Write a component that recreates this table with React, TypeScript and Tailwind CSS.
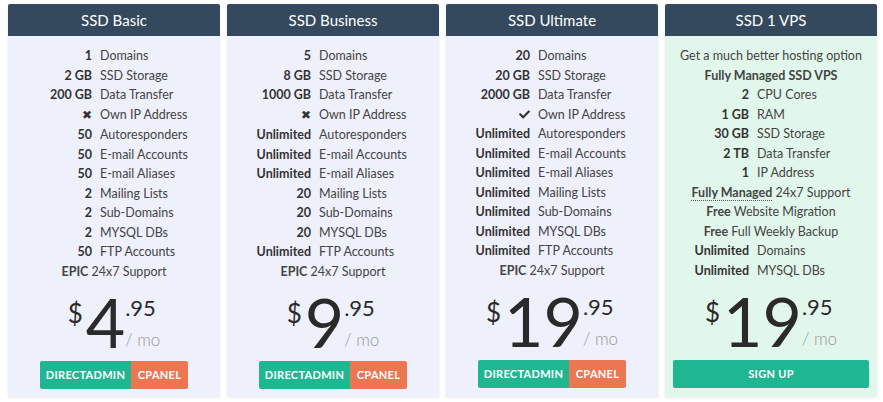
import { FaCheck } from "react-icons/fa"

type Row = { v: React.ReactNode; l?: string } | { center: React.ReactNode }

type Plan = {
  name: string
  rows: Row[]
  dollars: string
  vps?: boolean
}

const cross = <span className="font-['DejaVu_Sans',sans-serif] text-[12px] text-[#333]">✖</span>
const check = <FaCheck className="inline h-[11px] w-[11px] text-[#333] -mt-[2px]" />

const plans: Plan[] = [
  {
    name: "SSD Basic",
    dollars: "4",
    rows: [
      { v: "1", l: "Domains" },
      { v: "2 GB", l: "SSD Storage" },
      { v: "200 GB", l: "Data Transfer" },
      { v: cross, l: "Own IP Address" },
      { v: "50", l: "Autoresponders" },
      { v: "50", l: "E-mail Accounts" },
      { v: "50", l: "E-mail Aliases" },
      { v: "2", l: "Mailing Lists" },
      { v: "2", l: "Sub-Domains" },
      { v: "2", l: "MYSQL DBs" },
      { v: "50", l: "FTP Accounts" },
      { center: <><b className="font-bold">EPIC</b> 24x7 Support</> },
    ],
  },
  {
    name: "SSD Business",
    dollars: "9",
    rows: [
      { v: "5", l: "Domains" },
      { v: "8 GB", l: "SSD Storage" },
      { v: "1000 GB", l: "Data Transfer" },
      { v: cross, l: "Own IP Address" },
      { v: "Unlimited", l: "Autoresponders" },
      { v: "Unlimited", l: "E-mail Accounts" },
      { v: "Unlimited", l: "E-mail Aliases" },
      { v: "20", l: "Mailing Lists" },
      { v: "20", l: "Sub-Domains" },
      { v: "20", l: "MYSQL DBs" },
      { v: "Unlimited", l: "FTP Accounts" },
      { center: <><b className="font-bold">EPIC</b> 24x7 Support</> },
    ],
  },
  {
    name: "SSD Ultimate",
    dollars: "19",
    rows: [
      { v: "20", l: "Domains" },
      { v: "20 GB", l: "SSD Storage" },
      { v: "2000 GB", l: "Data Transfer" },
      { v: check, l: "Own IP Address" },
      { v: "Unlimited", l: "Autoresponders" },
      { v: "Unlimited", l: "E-mail Accounts" },
      { v: "Unlimited", l: "E-mail Aliases" },
      { v: "Unlimited", l: "Mailing Lists" },
      { v: "Unlimited", l: "Sub-Domains" },
      { v: "Unlimited", l: "MYSQL DBs" },
      { v: "Unlimited", l: "FTP Accounts" },
      { center: <><b className="font-bold">EPIC</b> 24x7 Support</> },
    ],
  },
  {
    name: "SSD 1 VPS",
    dollars: "19",
    vps: true,
    rows: [
      { center: "Get a much better hosting option" },
      { center: <b className="font-bold">Fully Managed SSD VPS</b> },
      { v: "2", l: "CPU Cores" },
      { v: "1 GB", l: "RAM" },
      { v: "30 GB", l: "SSD Storage" },
      { v: "2 TB", l: "Data Transfer" },
      { v: "1", l: "IP Address" },
      {
        center: (
          <>
            <b className="font-bold border-b border-dotted border-[#555]">Fully Managed</b> 24x7 Support
          </>
        ),
      },
      { center: <><b className="font-bold">Free</b> Website Migration</> },
      { center: <><b className="font-bold">Free</b> Full Weekly Backup</> },
      { v: "Unlimited", l: "Domains" },
      { v: "Unlimited", l: "MYSQL DBs" },
    ],
  },
]

function PlanCard({ plan }: { plan: Plan }) {
  return (
    <div className={`flex flex-col shadow-[0_1px_3px_rgba(0,0,0,0.08)] ${plan.vps ? "bg-[#e2f7eb]" : "bg-[#eef0fc]"}`}>
      <div className="h-8 bg-[#34495e] rounded-t-[2px] flex items-center justify-center text-white text-[15px]">
        {plan.name}
      </div>
      <div className="pt-[10px] text-[12.5px] leading-[19.5px] text-[#444]">
        {plan.rows.map((r, i) =>
          "center" in r ? (
            <div key={i} className="text-center whitespace-nowrap">{r.center}</div>
          ) : (
            <div key={i} className="flex whitespace-nowrap">
              <span className="w-[84px] shrink-0 text-right font-bold text-[#333]">{r.v}</span>
              <span className="pl-2">{r.l}</span>
            </div>
          )
        )}
      </div>
      <div className="flex justify-center items-start pt-[7px] h-[80px] text-[#2a2a2a]">
        <span className="text-[26px] leading-none mt-3 mr-[3px]">$</span>
        <span className="text-[68px] leading-none">{plan.dollars}</span>
        <span className="flex flex-col mt-[9px]">
          <span className="text-[22px] leading-none">.95</span>
          <span className="text-[17px] leading-none text-[#999] font-light mt-[12px]">/ mo</span>
        </span>
      </div>
      <div className="px-2 pb-2">
        {plan.vps ? (
          <button className="w-full h-7 rounded-[2px] bg-[#1fb792] text-white text-[11px] font-bold tracking-[0.3px]">
            SIGN UP
          </button>
        ) : (
          <div className="flex justify-center">
            <button className="w-[91px] h-7 rounded-l-[2px] bg-[#1fb792] text-white text-[11px] font-bold tracking-[0.3px]">
              DIRECTADMIN
            </button>
            <button className="w-[57px] h-7 rounded-r-[2px] bg-[#ec7652] text-white text-[11px] font-bold tracking-[0.3px]">
              CPANEL
            </button>
          </div>
        )}
      </div>
    </div>
  )
}

export default function App() {
  return (
    <div className="w-[883px] h-[402px] bg-white pt-1 pl-2 pr-[6px] font-['Lato','Noto_Sans',sans-serif]">
      <div className="grid grid-cols-4 gap-[7px]">
        {plans.map((p) => (
          <PlanCard key={p.name} plan={p} />
        ))}
      </div>
    </div>
  )
}
